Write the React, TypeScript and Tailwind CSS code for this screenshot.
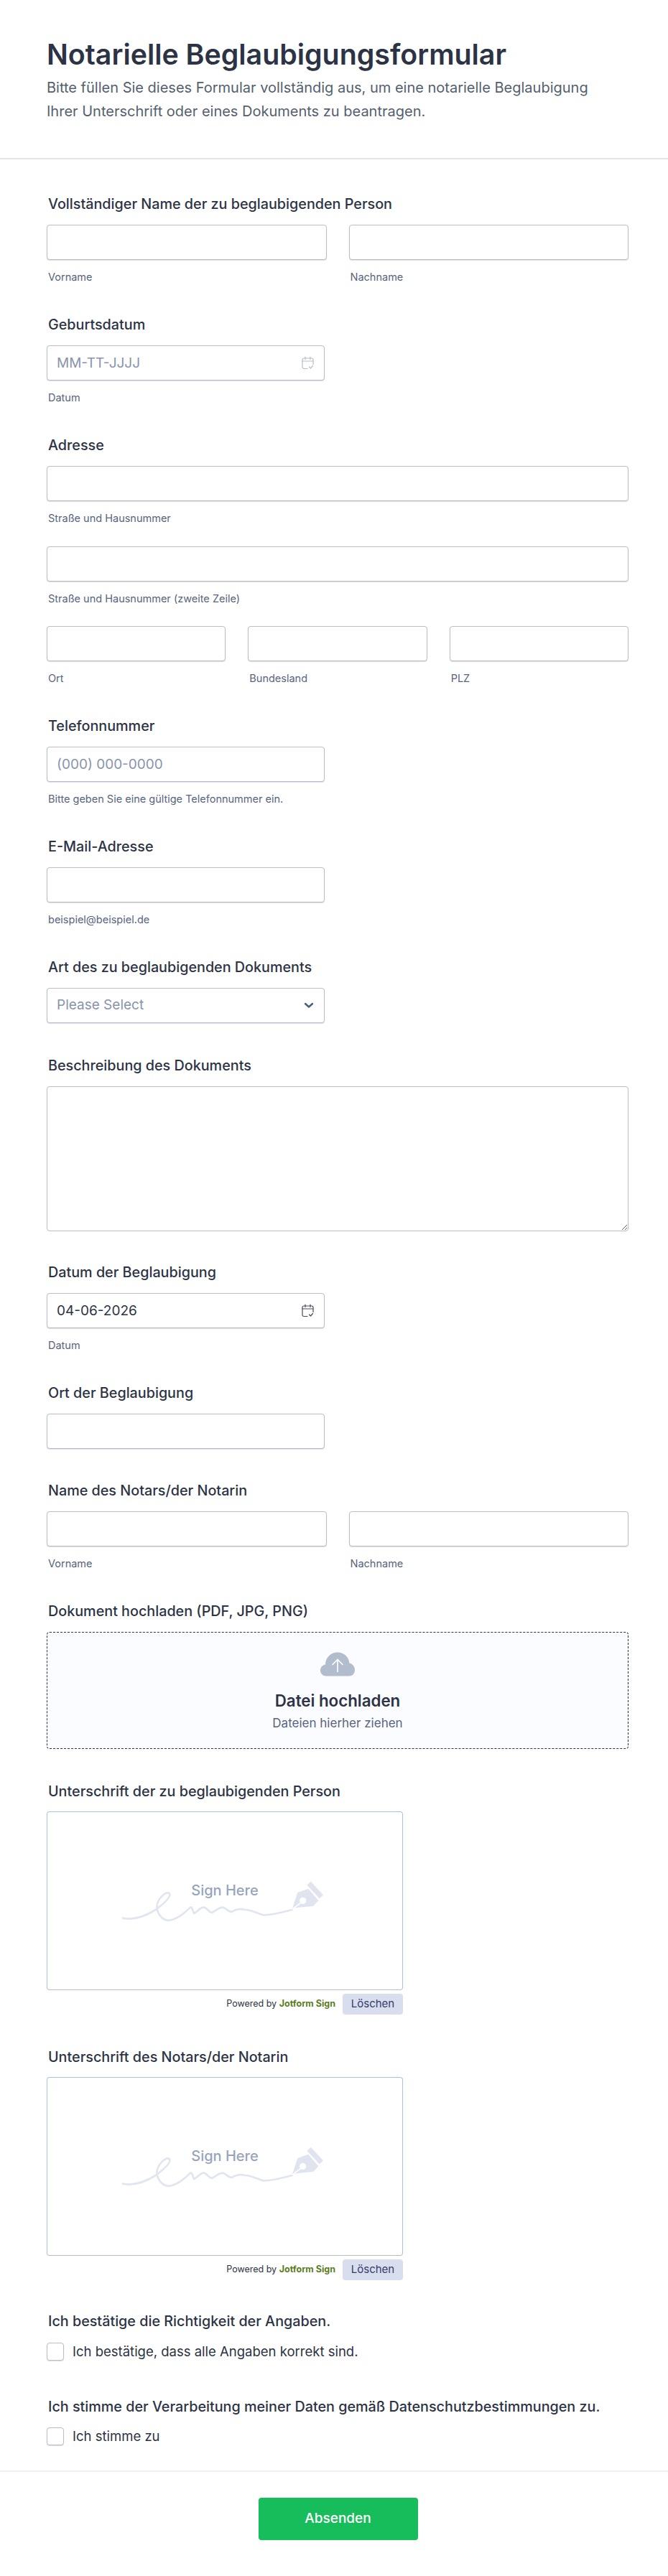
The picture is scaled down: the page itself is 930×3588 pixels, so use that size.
import React from "react";

const inputCls =
  "block w-full h-[49px] rounded border border-[#b8bdc9] bg-white px-[13px] text-[19px] text-[#2c3345] outline-none shadow-[0_1px_1px_rgba(184,189,201,0.5)] placeholder:text-[#8894ab]";

function Label({ children }: { children: React.ReactNode }) {
  return <div className="h-6 pl-0.5 text-[19.75px] leading-6 font-medium text-[#2c3345] mb-[17px]">{children}</div>;
}

function Sub({ children }: { children: React.ReactNode }) {
  return <div className="h-5 mt-3.5 pl-0.5 text-[14.5px] leading-5 text-[#57647e]">{children}</div>;
}

function CalendarIcon({ color }: { color: string }) {
  return (
    <svg width="17" height="19" viewBox="0 0 17 19" fill="none" stroke={color} strokeWidth="1.2" strokeLinecap="round" strokeLinejoin="round">
      <path d="M8 17.5H3a2 2 0 0 1-2-2V5a2 2 0 0 1 2-2h11a2 2 0 0 1 2 2v6.5" />
      <path d="M1 7h15" />
      <path d="M5 1v3.5M12 1v3.5" />
      <path d="M10.5 15l2 2 3-3.5" />
    </svg>
  );
}

function DateField({ placeholder, value }: { placeholder?: string; value?: string }) {
  return (
    <div className="relative w-[387px]">
      <input className={inputCls} placeholder={placeholder} defaultValue={value} />
      <div className="absolute right-[15px] top-[15px] flex">
        <CalendarIcon color={value ? "#4a4a5c" : "#b8bdc9"} />
      </div>
    </div>
  );
}

function NameRow() {
  return (
    <div className="flex gap-[31px]">
      <div className="flex-1">
        <input className={inputCls} />
        <Sub>Vorname</Sub>
      </div>
      <div className="flex-1">
        <input className={inputCls} />
        <Sub>Nachname</Sub>
      </div>
    </div>
  );
}

function SignaturePad() {
  return (
    <div className="w-[496px]">
      <div className="relative h-[249px] rounded border border-[#a9c2e0] border-b-[#b8bdc9] bg-white">
        <div className="absolute left-0 right-0 top-[97px] text-center text-[20px] leading-6 font-medium text-[#97a5bc]">Sign Here</div>
        <svg className="absolute left-[99px] top-[91px]" width="290" height="80" viewBox="45 165 870 240" fill="none">
          <path
            d="M63 335C110 345 160 325 200 300C240 270 265 245 258 232C245 218 205 255 205 290C210 330 240 350 265 343C295 335 325 310 345 290C350 285 355 300 360 315C375 310 385 290 400 290C415 290 420 310 435 312C450 305 465 290 480 290C495 292 505 312 520 308C540 295 555 295 575 300C600 300 620 315 650 322C690 322 730 310 770 300"
            stroke="#e0e5ef"
            strokeWidth="8"
            strokeLinecap="round"
          />
          <path d="M770 298L793 228L838 212L880 262L858 285L785 292Z" fill="#dfe4ee" />
          <circle cx="815" cy="262" r="14" fill="#fff" />
          <path d="M770 298L810 268" stroke="#fff" strokeWidth="5" />
          <path d="M840 190L892 245" stroke="#dfe4ee" strokeWidth="22" />
        </svg>
      </div>
      <div className="flex items-center justify-end mt-[5px]">
        <span className="text-[12.5px] text-[#2c3345] mr-2.5">
          Powered by <b className="font-bold text-[#5b7d1e]">Jotform Sign</b>
        </span>
        <button className="h-[29px] w-[84px] rounded bg-[#d9deef] text-[15px] text-[#343c6a]">Löschen</button>
      </div>
    </div>
  );
}

function CheckRow({ children }: { children: React.ReactNode }) {
  return (
    <div className="flex items-center h-[25px]">
      <span className="w-6 h-[25px] rounded border border-[#b8bdc9] bg-white mr-3 shadow-[0_1px_1px_rgba(184,189,201,0.5)]" />
      <span className="text-[18.5px] text-[#2c3345]">{children}</span>
    </div>
  );
}

export default function App() {
  return (
    <div className="w-[930px] min-h-[3588px] bg-white" style={{ fontFamily: '"Inter", "Liberation Sans", sans-serif' }}>
      <header className="h-[222px] border-b-2 border-[#e3e5ee] px-[65px] pt-[46px]">
        <h1 className="text-[39.3px] leading-[60px] font-semibold text-[#2c3345]">Notarielle Beglaubigungsformular</h1>
        <p className="text-[20px] leading-[33px] text-[#545f6f]">
          Bitte füllen Sie dieses Formular vollständig aus, um eine notarielle Beglaubigung
          <br />
          Ihrer Unterschrift oder eines Dokuments zu beantragen.
        </p>
      </header>

      <main className="pl-[65px] pr-[55px] pt-[50px]">
        <section className="mb-11">
          <Label>Vollständiger Name der zu beglaubigenden Person</Label>
          <NameRow />
        </section>
        <section className="mb-11">
          <Label>Geburtsdatum</Label>
          <DateField placeholder="MM-TT-JJJJ" />
          <Sub>Datum</Sub>
        </section>
        <section className="mb-11">
          <Label>Adresse</Label>
          <input className={inputCls} />
          <Sub>Straße und Hausnummer</Sub>
          <input className={`${inputCls} mt-[29px]`} />
          <Sub>Straße und Hausnummer (zweite Zeile)</Sub>
          <div className="grid grid-cols-3 gap-[31px] mt-7">
            <div>
              <input className={inputCls} />
              <Sub>Ort</Sub>
            </div>
            <div>
              <input className={inputCls} />
              <Sub>Bundesland</Sub>
            </div>
            <div>
              <input className={inputCls} />
              <Sub>PLZ</Sub>
            </div>
          </div>
        </section>
        <section className="mb-11">
          <Label>Telefonnummer</Label>
          <input className={`${inputCls} !w-[387px]`} placeholder="(000) 000-0000" />
          <Sub>Bitte geben Sie eine gültige Telefonnummer ein.</Sub>
        </section>
        <section className="mb-11">
          <Label>E-Mail-Adresse</Label>
          <input className={`${inputCls} !w-[387px]`} />
          <Sub>beispiel@beispiel.de</Sub>
        </section>
        <section className="mb-[47px]">
          <Label>Art des zu beglaubigenden Dokuments</Label>
          <div className="flex items-center justify-between w-[387px] h-[49px] rounded border border-[#b8bdc9] bg-white pl-[13px] pr-[14px] text-[19px] text-[#8894ab] shadow-[0_1px_1px_rgba(184,189,201,0.5)]">
            Please Select
            <svg width="14" height="9" viewBox="0 0 14 9" fill="none" stroke="#4b5b7c" strokeWidth="2.4" strokeLinecap="round" strokeLinejoin="round">
              <path d="M2 2l5 4.5L12 2" />
            </svg>
          </div>
        </section>
        <section className="mb-[45px]">
          <Label>Beschreibung des Dokuments</Label>
          <textarea className="block w-full h-[202px] rounded border border-[#b8bdc9] bg-white outline-none" />
        </section>
        <section className="mb-11">
          <Label>Datum der Beglaubigung</Label>
          <DateField value="04-06-2026" />
          <Sub>Datum</Sub>
        </section>
        <section className="mb-[46px]">
          <Label>Ort der Beglaubigung</Label>
          <input className={`${inputCls} !w-[387px]`} />
        </section>
        <section className="mb-11">
          <Label>Name des Notars/der Notarin</Label>
          <NameRow />
        </section>
        <section className="mb-[47px]">
          <Label>Dokument hochladen (PDF, JPG, PNG)</Label>
          <div className="flex flex-col items-center h-[163px] rounded border border-dashed border-[#2c3345] bg-[#fbfcff] pt-[27px]">
            <svg width="48" height="34" viewBox="0 0 48 34">
              <path
                d="M8 33.5C3.5 33.5 0 30 0 25.5 0 21.5 3 18 7 17.5 7 8 14.5 0.5 24 0.5 33 0.5 39.5 7 40.5 15.5 45 16.5 48 20.5 48 25 48 30 44.5 33.5 40 33.5Z"
                fill="#b1bccc"
              />
              <path d="M24 28V11M16.5 18L24 10.5 31.5 18" stroke="#fff" strokeWidth="1.6" fill="none" />
            </svg>
            <div className="mt-[22px] text-[22.3px] leading-6 font-semibold text-[#2c3345]">Datei hochladen</div>
            <div className="mt-[7px] text-[17px] leading-6 text-[#57647e]">Dateien hierher ziehen</div>
          </div>
        </section>
        <section className="mb-[47px]">
          <div className="h-6 pl-0.5 text-[19.75px] leading-6 font-medium text-[#2c3345] mb-4">Unterschrift der zu beglaubigenden Person</div>
          <SignaturePad />
        </section>
        <section className="mb-[45px]">
          <div className="h-6 pl-0.5 text-[19.75px] leading-6 font-medium text-[#2c3345] mb-4">Unterschrift des Notars/der Notarin</div>
          <SignaturePad />
        </section>
        <section className="mb-[52px]">
          <div className="h-6 pl-0.5 text-[19.75px] leading-6 font-medium text-[#2c3345] mb-[18px]">Ich bestätige die Richtigkeit der Angaben.</div>
          <CheckRow>Ich bestätige, dass alle Angaben korrekt sind.</CheckRow>
        </section>
        <section>
          <Label>Ich stimme der Verarbeitung meiner Daten gemäß Datenschutzbestimmungen zu.</Label>
          <CheckRow>Ich stimme zu</CheckRow>
        </section>
      </main>

      <footer className="mt-[35px] border-t-2 border-[#eef0f5] flex justify-center pl-[11px] pt-[36px]">
        <button className="w-[222px] h-[59px] rounded bg-[#18bd5b] text-[19px] font-medium text-white">Absenden</button>
      </footer>
    </div>
  );
}
